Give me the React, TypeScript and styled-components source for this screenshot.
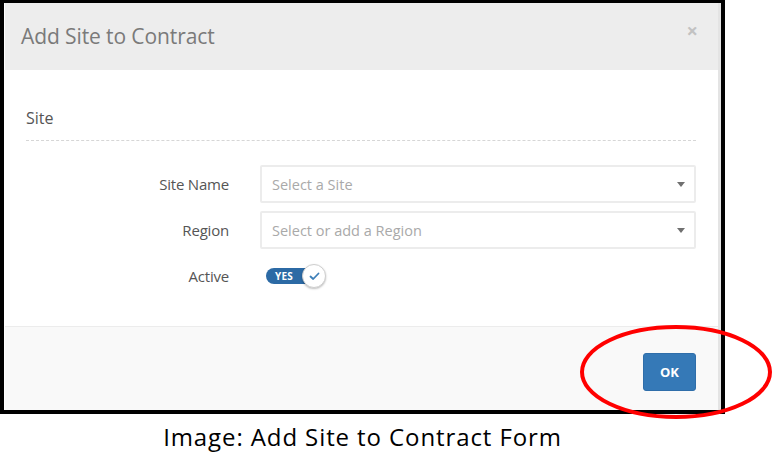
import React from "react";
import styled, { createGlobalStyle } from "styled-components";

const Global = createGlobalStyle`
  html, body { margin: 0; padding: 0; background: #fff; }
  body { font-family: "Open Sans", "Liberation Sans", sans-serif; }
  * { box-sizing: border-box; }
`;

const Page = styled.div`
  width: 777px;
  height: 454px;
  position: relative;
  overflow: hidden;
  background: #fff;
`;

const Frame = styled.div`
  width: 725px;
  height: 414px;
  border: 4px solid #000;
  border-top-width: 3px;
  display: flex;
  flex-direction: column;
  background: #fff;
`;

const Modal = styled.div`
  flex: 1;
  display: flex;
  flex-direction: column;
  border-right: 3px solid #e4e4e4;
  margin-left: 1px;
`;

const Header = styled.div`
  height: 67px;
  background: #ededed;
  display: flex;
  align-items: center;
  justify-content: space-between;
  padding: 0 20px 2px 16px;
`;

const Title = styled.h4`
  margin: 0;
  font-weight: 400;
  font-size: 21px;
  color: #7a7a7a;
  letter-spacing: -0.1px;
`;

const Close = styled.span`
  font-size: 20px;
  font-weight: 700;
  color: #c2c2c2;
  line-height: 1;
  margin-top: -9px;
`;

const Body = styled.div`
  flex: 1;
  padding: 37px 22px 0 21px;
  display: flex;
  flex-direction: column;
`;

const Section = styled.div`
  font-size: 16px;
  color: #555;
  padding-bottom: 11px;
  border-bottom: 1px dashed #d6d6d6;
  line-height: 22px;
`;

const Form = styled.div`
  display: flex;
  flex-direction: column;
  gap: 8px;
  margin-top: 24px;
`;

const Row = styled.div`
  display: grid;
  grid-template-columns: 203px 436px;
  column-gap: 31px;
  align-items: center;
  min-height: 38px;
`;

const Label = styled.label`
  text-align: right;
  font-size: 15px;
  color: #555;
  letter-spacing: -0.2px;
`;

const Select = styled.div`
  height: 38px;
  border: 2px solid #ececec;
  border-radius: 2px;
  display: flex;
  align-items: center;
  justify-content: space-between;
  padding: 0 9px 0 10px;
  font-size: 14.5px;
  color: #a9a9a9;
`;

const Caret = styled.span`
  width: 0;
  height: 0;
  border-left: 4px solid transparent;
  border-right: 4px solid transparent;
  border-top: 5px solid #707070;
`;

const Toggle = styled.div`
  display: flex;
  align-items: center;
  margin-left: 6px;
  height: 30px;
`;

const Pill = styled.div`
  width: 48px;
  height: 16px;
  background: #2c6aa5;
  border-radius: 8px;
  color: #fff;
  font-size: 10px;
  font-weight: 700;
  display: flex;
  align-items: center;
  padding-left: 9px;
  letter-spacing: 0.2px;
`;

const Knob = styled.div`
  width: 24px;
  height: 24px;
  border-radius: 50%;
  background: #fff;
  border: 1px solid #cfcfcf;
  box-shadow: 0 1px 2px rgba(0, 0, 0, 0.25);
  margin-left: -12px;
  display: flex;
  align-items: center;
  justify-content: center;
`;

const Footer = styled.div`
  height: 84px;
  background: #f9f9f9;
  border-top: 1px solid #ececec;
  display: flex;
  align-items: center;
  justify-content: flex-end;
  padding: 0 22px 0 0;
`;

const OkButton = styled.button`
  width: 53px;
  height: 38px;
  background: #3579b7;
  border: 1px solid #2f6eaa;
  border-radius: 3px;
  color: #fff;
  font-family: "Open Sans", "Liberation Sans", sans-serif;
  font-weight: 700;
  font-size: 13px;
  margin-top: 6px;
`;

const Caption = styled.div`
  width: 725px;
  text-align: center;
  font-family: "Open Sans", "Liberation Sans", sans-serif;
  font-size: 24px;
  letter-spacing: 0.9px;
  color: #000;
  margin-top: 8px;
  line-height: 30px;
`;

const Annotation = styled.svg`
  position: absolute;
  left: 577px;
  top: 323px;
  overflow: visible;
`;

export default function App() {
  return (
    <Page>
      <Global />
      <Frame>
        <Modal>
          <Header>
            <Title>Add Site to Contract</Title>
            <Close>×</Close>
          </Header>
          <Body>
            <Section>Site</Section>
            <Form>
              <Row>
                <Label>Site Name</Label>
                <Select>
                  <span>Select a Site</span>
                  <Caret />
                </Select>
              </Row>
              <Row>
                <Label>Region</Label>
                <Select>
                  <span>Select or add a Region</span>
                  <Caret />
                </Select>
              </Row>
              <Row>
                <Label>Active</Label>
                <Toggle>
                  <Pill>YES</Pill>
                  <Knob>
                    <svg width="11" height="9" viewBox="0 0 11 9">
                      <path d="M1.5 4.5 L4.2 7 L9.5 1.5" fill="none" stroke="#3d7fb8" strokeWidth="1.8" strokeLinecap="round" strokeLinejoin="round" />
                    </svg>
                  </Knob>
                </Toggle>
              </Row>
            </Form>
          </Body>
          <Footer>
            <OkButton>OK</OkButton>
          </Footer>
        </Modal>
      </Frame>
      <Caption>Image: Add Site to Contract Form</Caption>
      <Annotation width="200" height="104" viewBox="0 0 200 104">
        <ellipse cx="99" cy="49" rx="94" ry="45" fill="none" stroke="#ff0000" strokeWidth="4" />
      </Annotation>
    </Page>
  );
}
